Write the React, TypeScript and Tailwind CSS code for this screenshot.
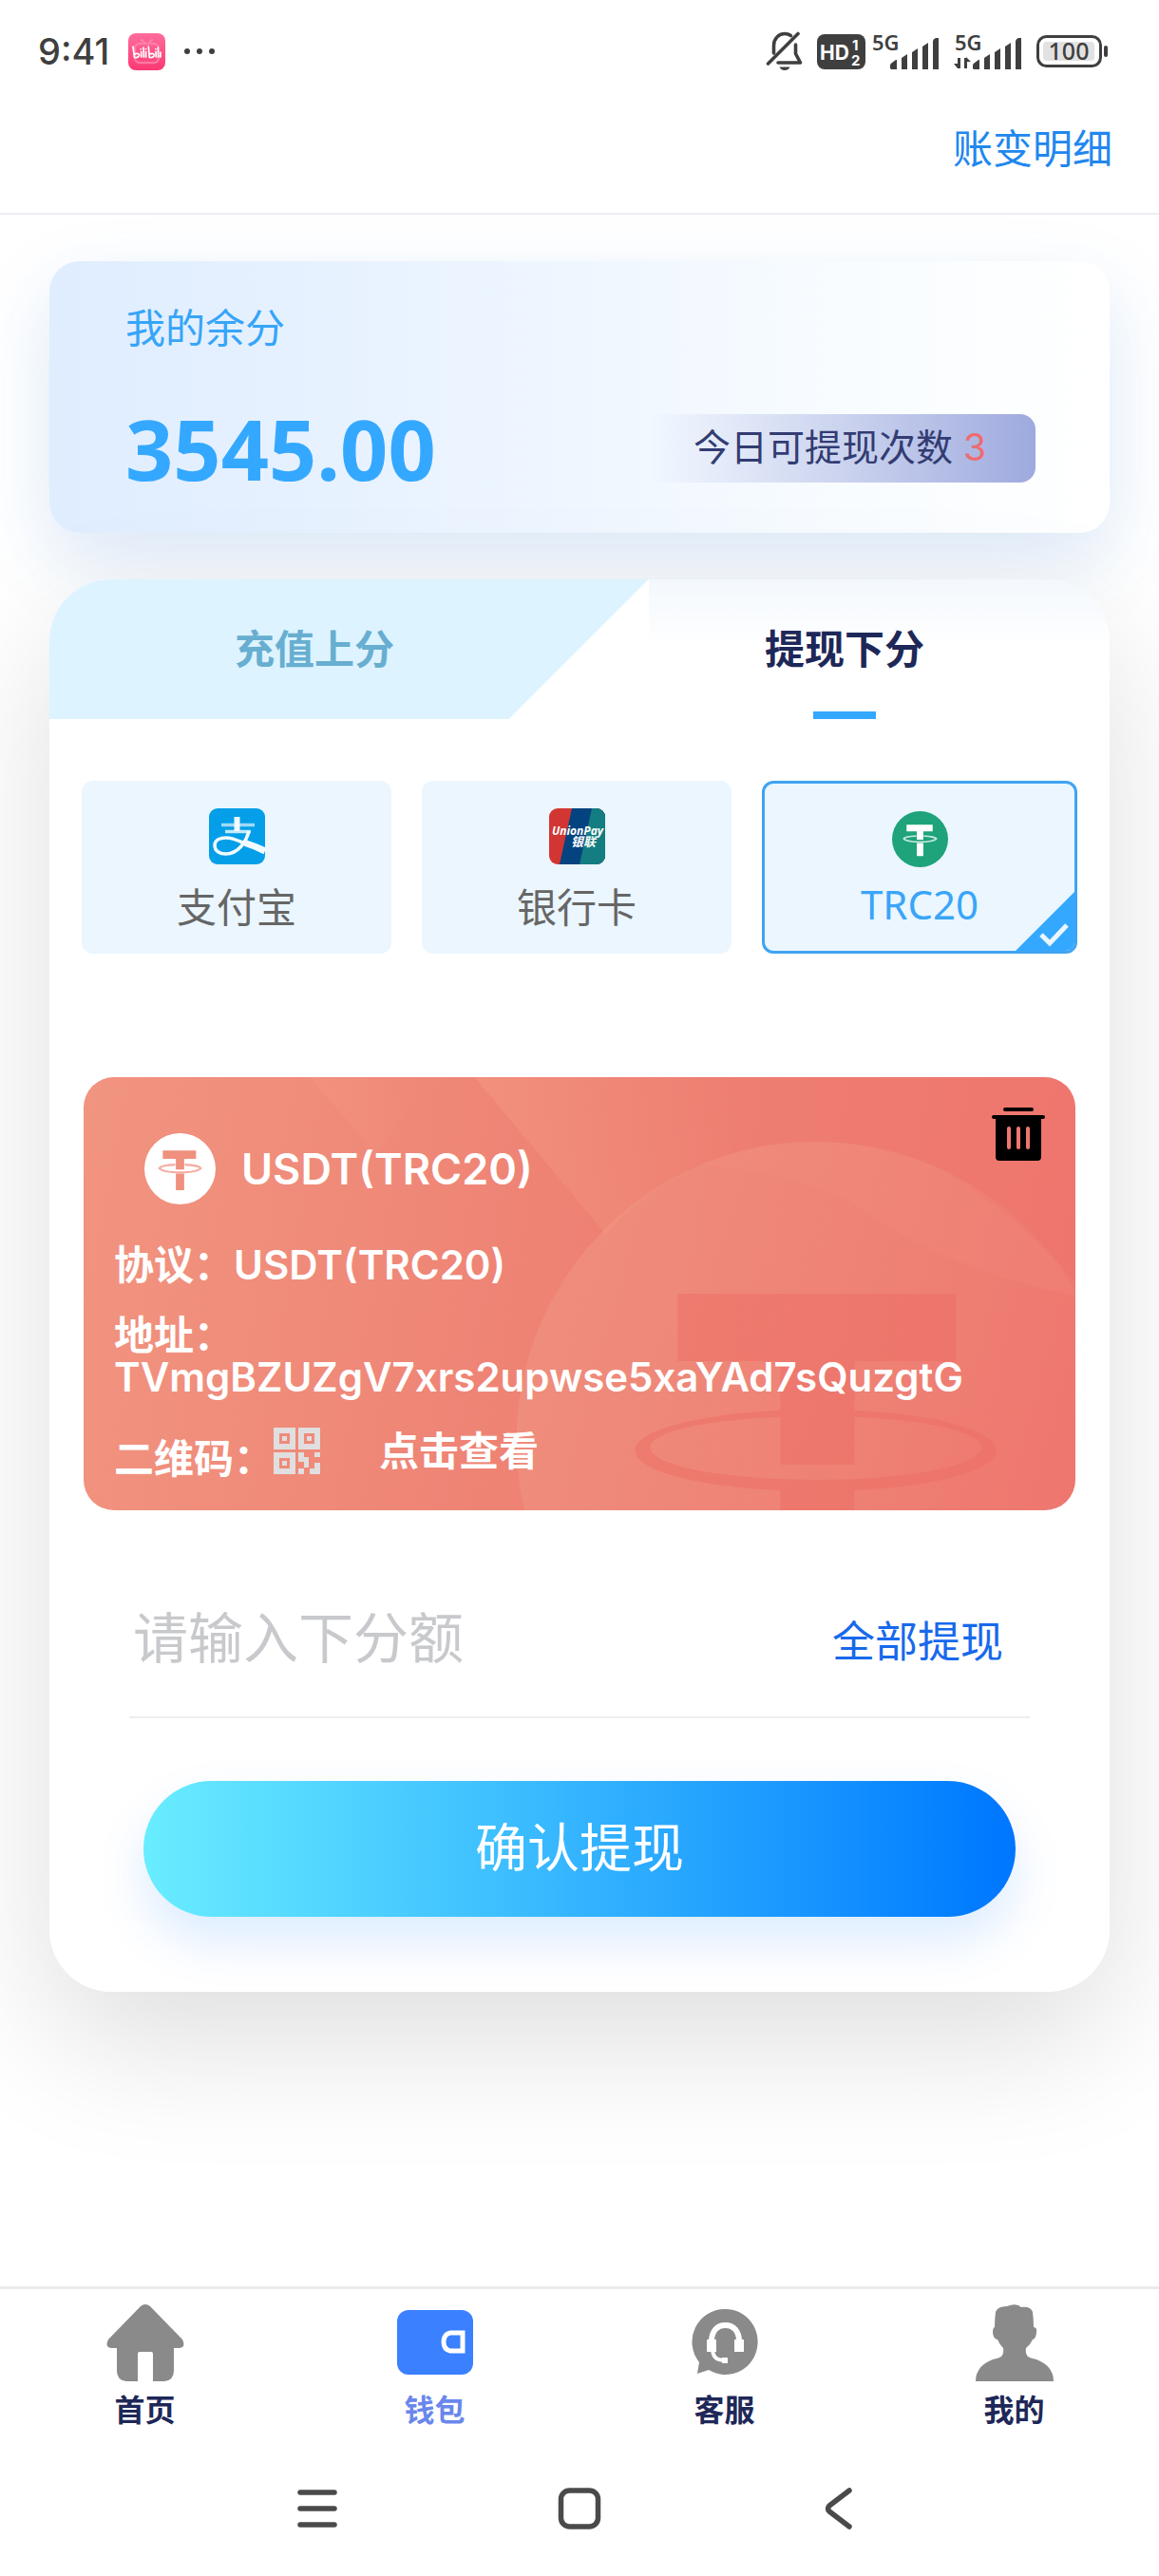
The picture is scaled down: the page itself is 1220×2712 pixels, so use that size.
import { useState } from "react";
import type { ReactNode } from "react";

type MethodId = "alipay" | "bank" | "trc20";
type TabId = "home" | "wallet" | "service" | "mine";

function BilibiliIcon() {
  return (
    <svg className="w-[39px] h-[39px]" viewBox="0 0 39 39" aria-hidden="true">
      <defs>
        <linearGradient id="bili" x1="0" y1="0" x2="0" y2="1">
          <stop offset="0" stopColor="#ff6c9c" />
          <stop offset="1" stopColor="#fb3973" />
        </linearGradient>
      </defs>
      <rect width="39" height="39" rx="8" fill="url(#bili)" />
      <g stroke="#ff8db2" strokeWidth="2.4" fill="none" strokeLinecap="round" opacity="0.7">
        <rect x="7" y="11" width="25" height="20" rx="5" />
        <path d="M14 7l3 3M25 7l-3 3" />
      </g>
      <g stroke="#fff" strokeWidth="1.7" fill="none" strokeLinecap="round">
        <path d="M5 14l1.500 11.500c4 .5 5.500-1.500 5-3s-3-1.500-5-.3" />
        <path d="M13.600 19.500l.3 5.500M16 15l.4 10M18.600 19.500v5.500M13.300 16.500v.2M18.500 16.500v.2" />
        <path d="M21.300 14l1 11.500c4 .5 5.300-1.500 4.800-3s-3-1.500-4.800-.3" />
        <path d="M29 19.500l.3 5.500M31.300 15l.3 10M33.900 20v5M28.800 16.500v.2" />
      </g>
    </svg>
  );
}

function MutedBellIcon() {
  return (
    <svg
      className="w-[40px] h-[42px]"
      viewBox="0 0 40 42"
      fill="none"
      stroke="#3f3f3f"
      strokeWidth="3.600"
      strokeLinecap="round"
      strokeLinejoin="round"
      aria-hidden="true"
    >
      <path d="M2.500 34L34 2.500" />
      <path d="M8.500 23v-8c0-7 5-12.500 11.500-12.500 2.600 0 4.700.7 6.500 2" />
      <path d="M31.500 14v9.500l5 9.500H13" />
      <path d="M14.500 37.500h11c-1 2.500-3 3.500-5.500 3.500s-4.500-1-5.500-3.500z" fill="#3f3f3f" stroke="none" />
    </svg>
  );
}

function HdIcon() {
  return (
    <svg className="w-[51px] h-[37px]" viewBox="0 0 51 37" aria-hidden="true">
      <rect width="51" height="37" rx="8" fill="#3f3f3f" />
      <g fill="#fff" fontFamily="Inter, sans-serif" fontWeight="700">
        <text x="3" y="27" fontSize="21">HD</text>
        <text x="37" y="17" fontSize="15">1</text>
        <text x="36" y="33" fontSize="15">2</text>
      </g>
    </svg>
  );
}

function SignalIcon({ transfer = false }: { transfer?: boolean }) {
  return (
    <svg className="w-[73px] h-[40px]" viewBox="0 -4 73 40" fill="#3f3f3f" aria-hidden="true">
      <text x="1" y="15" fontSize="22" fontWeight="600" fontFamily='"Noto Sans", sans-serif'>
        5G
      </text>
      {transfer && <path d="M4 34V23h3v11zM4 34l-4-5h5zM11 23h3v11h-3zM13 22l5 5h-5z" />}
      <path d="M20 34v-3q0-2 2-3l4-3h1v10h-6zM32 35V23l6-4v16zM43 35V17l6-4v22zM54 35V11l6-4v28zM65 35V6q0-3 3-4h3v33z" />
    </svg>
  );
}

function BatteryIcon() {
  return (
    <svg className="w-[76px] h-[34px]" viewBox="0 0 76 34" aria-hidden="true">
      <rect x="1.500" y="1.500" width="66" height="31" rx="9" fill="none" stroke="#3f3f3f" strokeWidth="3" />
      <rect x="7" y="7" width="54" height="20" rx="4" fill="#e2e2e2" />
      <rect x="71" y="11" width="4" height="12" rx="2" fill="#3f3f3f" />
      <text
        x="34"
        y="26"
        textAnchor="middle"
        fontSize="25"
        fontWeight="500"
        fontFamily='"Noto Sans", sans-serif'
        fill="#3f3f3f"
      >
        100
      </text>
    </svg>
  );
}

function AlipayIcon() {
  return (
    <svg className="w-[59px] h-[59px]" viewBox="0 0 59 59" aria-hidden="true">
      <rect width="59" height="59" rx="9" fill="#049fe8" />
      <g fill="none" stroke="#f2faff">
        <path d="M29.500 9v15" strokeWidth="6" />
        <path d="M13 17.500h35" strokeWidth="3.500" opacity="0.650" />
        <path d="M17 24.500h27" strokeWidth="3.500" opacity="0.800" />
        <path d="M42 24c-3 12-12 24-24 24-7 0-12-3-12-9s6-8 12-8c10 0 20 7 28 9.500" strokeWidth="3.500" />
        <path d="M38 36.500q10 3 21 8.500" strokeWidth="7" />
      </g>
    </svg>
  );
}

function UnionPayIcon() {
  return (
    <svg className="w-[59px] h-[59px]" viewBox="0 0 59 59" aria-hidden="true">
      <clipPath id="union">
        <rect width="59" height="59" rx="9" />
      </clipPath>
      <g clipPath="url(#union)">
        <rect width="59" height="59" fill="#d23632" />
        <path d="M24 0h35v59H11z" fill="#04437f" />
        <path d="M45 0h14v59H32z" fill="#147d82" />
      </g>
      <g fill="#fff" fontStyle="italic" fontWeight="700">
        <text x="3" y="28" fontSize="12" fontFamily='"Open Sans", sans-serif'>UnionPay</text>
        <text x="23" y="40" fontSize="13" fontFamily='"Noto Sans CJK SC", sans-serif'>银联</text>
      </g>
    </svg>
  );
}

function TetherIcon({ className, disc, mark }: { className: string; disc: string; mark: string }) {
  return (
    <svg className={className} viewBox="0 0 60 60" aria-hidden="true">
      <circle cx="30" cy="30" r="30" fill={disc} />
      <path d="M15.500 14.500h28v7H33.500v9h-7v-9h-11zM26.500 34h7v14h-7z" fill={mark} />
      <path d="M26 26.500q-12 .5-13.500 3 3 3.500 17.500 3.500t17.500-3.500q-2-2.500-13.500-3" fill="none" stroke={mark} strokeWidth="1.800" opacity="0.750" />
    </svg>
  );
}

function TrashIcon() {
  return (
    <svg className="w-14 h-14" viewBox="0 0 56 56" aria-hidden="true">
      <rect x="12" width="32" height="4" rx="2" />
      <path
        fillRule="evenodd"
        d="M2 8h52a2 2 0 010 4h-2v40a4 4 0 01-4 4H8a4 4 0 01-4-4V12H2a2 2 0 010-4zM16 22v20a2 2 0 004 0V22a2 2 0 00-4 0zM26 22v20a2 2 0 004 0V22a2 2 0 00-4 0zM36 22v20a2 2 0 004 0V22a2 2 0 00-4 0z"
      />
    </svg>
  );
}

function QrIcon() {
  return (
    <svg className="w-[49px] h-[49px]" viewBox="0 0 49 49" fill="#e0dedf" aria-hidden="true">
      <path
        fillRule="evenodd"
        d="M0 0h23v23H0zM6 6v11h11V6zM26 0h23v23H26zM32 6v11h11V6zM0 26h23v23H0zM6 32v11h11V32z"
      />
      <path d="M9 9h5v5H9zM35 9h5v5h-5zM9 35h5v5H9zM26 26h6v5h5v11h-5v-6h-6zM43 26h6v5h-6zM43 37h6v12H38v-6h5zM26 43h6v6h-6z" />
    </svg>
  );
}

function CardArtwork() {
  return (
    <svg
      className="absolute inset-0 w-full h-full"
      viewBox="0 0 1045 456"
      preserveAspectRatio="none"
      aria-hidden="true"
    >
      <defs>
        <linearGradient id="streak" gradientUnits="userSpaceOnUse" x1="440" y1="60" x2="680" y2="0">
          <stop offset="0" stopColor="#f6a488" stopOpacity="0.320" />
          <stop offset="1" stopColor="#f6a488" stopOpacity="0" />
        </linearGradient>
        <linearGradient id="faint" gradientUnits="userSpaceOnUse" x1="250" y1="20" x2="350" y2="0">
          <stop offset="0" stopColor="#f6a488" stopOpacity="0.200" />
          <stop offset="1" stopColor="#f6a488" stopOpacity="0" />
        </linearGradient>
        <linearGradient id="coin" x1="0" y1="0.300" x2="1" y2="0.700">
          <stop offset="0" stopColor="#f0a38e" stopOpacity="0.340" />
          <stop offset="1" stopColor="#f0a38e" stopOpacity="0.020" />
        </linearGradient>
      </defs>
      <path d="M238 0h130l-60 80z" fill="url(#faint)" />
      <path d="M412 0h270v80Q600 110 550 165z" fill="url(#streak)" />
      <circle cx="772" cy="384" r="316" fill="url(#coin)" />
      <path
        d="M650 92Q772 40 905 98 990 150 1045 215v16Q900 200 807 130 740 100 650 92z"
        fill="#f3a08d"
        opacity="0.120"
      />
      <g fill="#ed6d64" opacity="0.480">
        <path d="M626 228h293v71H812v109h-78V299H626zM734 430h78v26h-78z" />
        <path
          fillRule="evenodd"
          d="M581 393c0-24 85-43 191-43s190 19 190 43-84 43-190 43-191-19-191-43zm16-3c0 19 78 34 175 34s174-15 174-34-77-33-174-33-175 14-175 33z"
        />
      </g>
    </svg>
  );
}

function HomeIcon() {
  return (
    <svg className="w-[84px] h-[84px]" viewBox="0 0 84 84" fill="#8a8a8a" aria-hidden="true">
      <path d="M37 4q5-4 10 0l34 35q4 8-3 9h-6v24q0 10-10 11H50V54q0-2-2-2H36q-2 0-2 2v29H22q-10-1-10-11V48H6q-7-1-3-9z" />
    </svg>
  );
}

function WalletIcon() {
  return (
    <svg className="w-[84px] h-[84px]" viewBox="0 0 84 84" aria-hidden="true">
      <rect x="2" y="8" width="80" height="68" rx="12" fill="#3a80ff" />
      <path d="M71 32v19H58c-5-1-7-5-7-9.500s2-8.500 7-9.500z" fill="none" stroke="#fff" strokeWidth="5" />
    </svg>
  );
}

function ServiceIcon() {
  return (
    <svg className="w-[84px] h-[84px]" viewBox="0 0 84 84" aria-hidden="true">
      <path d="M42 7a34 34.500 0 11-17 64l-12 4 2-12A34.500 34.500 0 0142 7z" fill="#8a8a8a" />
      <path d="M28 41c0-11 6-17 14.500-17S57 30 57 41" fill="none" stroke="#fff" strokeWidth="6" />
      <path d="M23 39h10v13H23zM52 39h10v13H52z" fill="#fff" />
      <path d="M29 50c1 9 5 11 15 11" fill="none" stroke="#fff" strokeWidth="4" />
      <path d="M39 58h6v6h-6z" fill="#fff" />
    </svg>
  );
}

function UserIcon() {
  return (
    <svg className="w-[84px] h-[84px]" viewBox="0 0 84 84" fill="#8a8a8a" aria-hidden="true">
      <path d="M22 10q2-6 12-6 10-4 15 1 10-1 12 5 1 8 1 16 4 0 3 6-1 7-4 7-2 5-7 9-1 6 2 9 3 2 9 3 18 7 18 23H1q0-16 18-23 6-1 9-3 3-3 2-9-4-4-6-9-4 0-5-7 0-6 2-6 0-8 1-16z" />
    </svg>
  );
}

function StatusBar() {
  return (
    <div className="flex items-center justify-between h-[108px] pl-10 pr-[53px]">
      <div className="flex items-center text-[#3f3f3f]">
        <span className="text-[38px] leading-10 font-medium">9:41</span>
        <span className="ml-5">
          <BilibiliIcon />
        </span>
        <span className="flex gap-[7px] ml-5">
          <i className="w-[6px] h-[6px] rounded-full bg-[#3f3f3f]" />
          <i className="w-[6px] h-[6px] rounded-full bg-[#3f3f3f]" />
          <i className="w-[6px] h-[6px] rounded-full bg-[#3f3f3f]" />
        </span>
      </div>
      <div className="flex items-center gap-[14px]">
        <MutedBellIcon />
        <HdIcon />
        <span className="-ml-2">
          <SignalIcon />
        </span>
        <SignalIcon transfer />
        <BatteryIcon />
      </div>
    </div>
  );
}

function BalanceCard() {
  return (
    <section className="rounded-[32px] pt-[46px] pb-[53px] pl-20 pr-[78px] bg-[linear-gradient(90deg,#dfedff_0%,#edf5ff_45%,#f8fcff_75%,#ffffff_100%)] shadow-[0_30px_80px_rgba(20,110,210,0.15)]">
      <h2 className="text-[42px] leading-[50px] text-[#36a5f8]">我的余分</h2>
      <div className="flex items-center justify-between mt-[65px]">
        <p className='text-[88px] leading-[72px] font-bold text-[#34a8ff] font-["Noto_Sans"]'>
          3545.00
        </p>
        <p className="h-[72px] pl-[46px] pr-[52px] rounded-r-2xl text-[39px] leading-[70px] text-[#323c72] bg-linear-to-r from-transparent to-[#9eaade]">
          今日可提现次数{" "}
          <span className="text-[#ee6b70]">3</span>
        </p>
      </div>
    </section>
  );
}

interface MethodButtonProps {
  label: string;
  icon: ReactNode;
  active: boolean;
  onSelect: () => void;
}

function MethodButton({ label, icon, active, onSelect }: MethodButtonProps) {
  return (
    <button
      type="button"
      onClick={onSelect}
      aria-pressed={active}
      className={`relative flex flex-1 flex-col items-center rounded-xl pt-[29px] pb-6 overflow-hidden bg-[#ebf6ff] text-[42px] leading-[50px] font-["Noto_Sans","Noto_Sans_CJK_SC",sans-serif] ${
        active ? "border-3 border-[#3fa4f3] text-[#39a5f8]" : "text-[#666]"
      }`}
    >
      {icon}
      <span className={active ? "mt-[14px]" : "mt-5"}>{label}</span>
      {active && (
        <svg className="absolute right-0 bottom-0 w-[62px] h-[62px]" viewBox="0 0 62 62" aria-hidden="true">
          <path d="M62 0v62H0z" fill="#34a8ff" />
          <path d="M27 45l9 9 18-19" fill="none" stroke="#ebf6ff" strokeWidth="5" />
        </svg>
      )}
    </button>
  );
}

function WalletCard() {
  return (
    <section className="relative overflow-hidden rounded-[32px] bg-linear-100 from-[#f19480] via-[#ee8173] to-[#ee746d] text-white text-[42px] leading-[44px] font-semibold">
      <CardArtwork />
      <div className="relative px-8 pt-8 pb-[38px]">
        <div className="flex items-start justify-between">
          <div className="flex items-center gap-[27px] mt-[27px] ml-8">
            <TetherIcon className="w-[75px] h-[75px]" disc="#ffffff" mark="#f0907f" />
            <h3 className="text-[45px]">USDT(TRC20)</h3>
          </div>
          <button type="button" aria-label="删除">
            <TrashIcon />
          </button>
        </div>
        <p className="mt-[42px]">协议：USDT(TRC20)</p>
        <p className="mt-[30px]">
          地址：
          <br />
          TVmgBZUZgV7xrs2upwse5xaYAd7sQuzgtG
        </p>
        <div className="flex items-center mt-[31px]">
          <span className="self-end leading-8">二维码：</span>
          <QrIcon />
          <button type="button" className="ml-[62px]">
            点击查看
          </button>
        </div>
      </div>
    </section>
  );
}

function WithdrawForm() {
  const [amount, setAmount] = useState("");

  return (
    <form className="px-[84px] pt-[90px] pb-[79px]" onSubmit={(e) => e.preventDefault()}>
      <div className="flex items-center border-b-2 border-[#ededf0] pb-[37px] pl-1 pr-7">
        <input
          type="text"
          inputMode="decimal"
          aria-label="下分额"
          placeholder="请输入下分额"
          value={amount}
          onChange={(e) => setAmount(e.target.value)}
          className="flex-1 min-w-0 h-[90px] text-[58px] text-gray-800 placeholder:text-[#c8c9cc] outline-none"
        />
        <button
          type="button"
          onClick={() => setAmount("3545.00")}
          className="pt-2 text-[45px] leading-[50px] text-[#1769ec]"
        >
          全部提现
        </button>
      </div>
      <div className="px-[15px] mt-[66px]">
        <button
          type="submit"
          className="w-full rounded-full pt-[34px] pb-[37px] text-[55px] leading-[72px] text-white bg-linear-to-r from-[#69edff] to-[#0076ff] shadow-[0_26px_52px_rgba(0,118,255,0.14)]"
        >
          确认提现
        </button>
      </div>
    </form>
  );
}

const METHODS: { id: MethodId; label: string; icon: ReactNode }[] = [
  { id: "alipay", label: "支付宝", icon: <AlipayIcon /> },
  { id: "bank", label: "银行卡", icon: <UnionPayIcon /> },
  {
    id: "trc20",
    label: "TRC20",
    icon: <TetherIcon className="w-[59px] h-[59px]" disc="#1ea37a" mark="#ffffff" />,
  },
];

const TABS: { id: TabId; label: string; icon: ReactNode }[] = [
  { id: "home", label: "首页", icon: <HomeIcon /> },
  { id: "wallet", label: "钱包", icon: <WalletIcon /> },
  { id: "service", label: "客服", icon: <ServiceIcon /> },
  { id: "mine", label: "我的", icon: <UserIcon /> },
];

function TabBar() {
  return (
    <nav className="relative grid grid-cols-4 border-t-3 border-[#ebebeb] bg-white pt-[14px] pb-4">
      {TABS.map((tab) => (
        <a
          key={tab.id}
          href={`#${tab.id}`}
          className={`flex flex-col items-center gap-3 text-[32px] leading-9 font-semibold ${
            tab.id === "wallet" ? "text-[#6a87ec]" : "text-[#1e2858]"
          }`}
        >
          {tab.icon}
          {tab.label}
        </a>
      ))}
    </nav>
  );
}

function SystemBar() {
  return (
    <div className="relative flex items-center justify-center gap-[230px] h-[140px] bg-white">
      <button type="button" aria-label="菜单">
        <svg className="w-[46px] h-[46px]" viewBox="0 0 46 46" stroke="#4a4a4a" strokeWidth="5.500" strokeLinecap="round">
          <path d="M5 5h36M5 22h36M5 39h36" />
        </svg>
      </button>
      <button type="button" aria-label="主屏幕">
        <svg className="w-[46px] h-[46px]" viewBox="0 0 46 46" fill="none" stroke="#4a4a4a" strokeWidth="5.500">
          <rect x="3.500" y="3" width="39" height="38" rx="9" />
        </svg>
      </button>
      <button type="button" aria-label="返回">
        <svg
          className="w-[46px] h-[46px]"
          viewBox="0 0 46 46"
          fill="none"
          stroke="#4a4a4a"
          strokeWidth="5.500"
          strokeLinecap="round"
          strokeLinejoin="round"
        >
          <path d="M31 3L10 19q-3 3 0 6l21 16" />
        </svg>
      </button>
    </div>
  );
}

export default function App() {
  const [method, setMethod] = useState<MethodId>("trc20");

  return (
    <div className='flex flex-col min-h-screen overflow-hidden bg-white font-["Inter","Noto_Sans_CJK_SC",sans-serif]'>
      <div className="relative z-10 bg-white">
        <StatusBar />
        <header className="flex items-center justify-end border-b-2 border-[#ebeef2] px-[49px] pt-6 pb-[42px]">
          <a href="#records" className="text-[42px] leading-[50px] text-[#2187ee]">
            账变明细
          </a>
        </header>
      </div>

      <main className="flex-1 px-[52px] pt-[49px] pb-16">
        <BalanceCard />

        <section className="mt-[49px] rounded-[65px] bg-white shadow-[0_54px_140px_rgba(0,0,0,0.13)]">
          <div className="relative grid grid-cols-2 overflow-hidden rounded-t-[65px]">
            <span className="absolute inset-y-0 left-0 w-[56.5%] bg-[#ddf3ff] [clip-path:polygon(0_0,100%_0,calc(100%-147px)_100%,0_100%)]" />
            <span className="absolute top-0 right-0 w-[43.5%] h-[72px] bg-linear-to-b from-[#f3f8fd] to-white" />
            <button
              type="button"
              className="relative py-12 text-[42px] leading-[51px] font-semibold text-[#67aed0]"
            >
              充值上分
            </button>
            <button
              type="button"
              className="relative flex flex-col items-center pt-12 text-[42px] leading-[51px] font-semibold text-[#1e2858]"
            >
              提现下分
              <span className="w-[66px] h-2 mt-10 bg-[#34a8ff]" />
            </button>
          </div>

          <div className="flex items-start gap-8 px-[34px] mt-[65px]">
            {METHODS.map((item) => (
              <MethodButton
                key={item.id}
                label={item.label}
                icon={item.icon}
                active={item.id === method}
                onSelect={() => setMethod(item.id)}
              />
            ))}
          </div>

          <div className="px-9 mt-[130px]">
            <WalletCard />
          </div>

          <WithdrawForm />
        </section>
      </main>

      <TabBar />
      <SystemBar />
    </div>
  );
}
